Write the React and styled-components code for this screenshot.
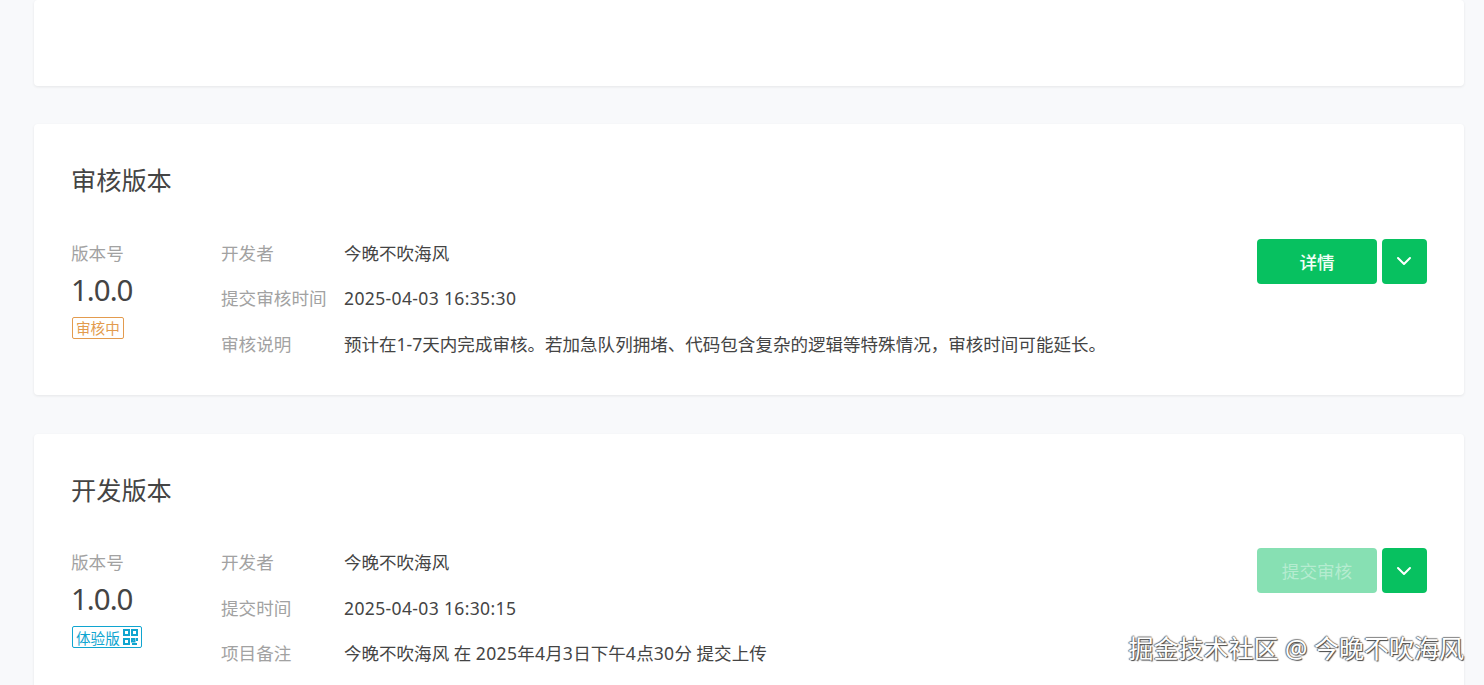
import React from "react"
import styled, { createGlobalStyle } from "styled-components"

const GlobalStyle = createGlobalStyle`
    html, body {
        margin: 0;
        padding: 0;
        height: 100%;
        overflow: hidden;
        background: #f8f9fb;
        font-family: "Noto Sans", "Noto Sans CJK SC", "Liberation Sans", sans-serif;
    }
`

const Page = styled.div`
    position: relative;
    width: 1484px;
    height: 685px;
    overflow: hidden;
    box-sizing: border-box;
    padding: 0 20px 0 34px;
    display: flex;
    flex-direction: column;
    gap: 38.5px;
`

const Card = styled.section`
    flex: none;
    background: #fff;
    border-radius: 4px;
    box-shadow: 0 1px 3px rgba(0, 0, 0, 0.08);
    box-sizing: border-box;
    height: ${(p) => p.$height}px;
    padding: 0 37px 0 37px;
`

const Title = styled.h2`
    margin: 0;
    padding-top: 40px;
    height: 114px;
    box-sizing: border-box;
    font-size: 25.2px;
    line-height: 32px;
    font-weight: 400;
    color: #444;
`

const Body = styled.div`
    display: flex;
    align-items: flex-start;
`

const VersionCol = styled.div`
    width: 150px;
    flex: none;
`

const Label = styled.div`
    font-size: 17.6px;
    line-height: 30px;
    margin-top: -0.5px;
    color: #a2a2a2;
    white-space: nowrap;
`

const VersionNum = styled.div`
    font-size: 29.5px;
    line-height: 40px;
    letter-spacing: -1px;
    margin-top: 2px;
    color: #444;
`

const Tag = styled.span`
    display: inline-flex;
    align-items: center;
    gap: 3px;
    box-sizing: border-box;
    height: 22px;
    margin: 7px 0 0 1px;
    padding: 0 3px;
    font-size: 14.6px;
    border: 1px solid ${(p) => p.$color};
    border-radius: 2px;
    color: ${(p) => p.$color};
`

const Rows = styled.div`
    flex: 1;
    display: grid;
    grid-template-columns: 123px 1fr;
    grid-auto-rows: 45.6px;
`

const Value = styled.div`
    font-size: 17.55px;
    line-height: 30px;
    margin-top: -0.5px;
    color: #444;
    white-space: nowrap;
`

const Num = styled.span`
    letter-spacing: 0.35px;
`

const Actions = styled.div`
    flex: none;
    display: flex;
    gap: 5px;
    margin-top: 0.5px;
`

const MainButton = styled.button`
    width: 120px;
    height: 45px;
    border: 0;
    border-radius: 4px;
    padding: 0;
    font-family: inherit;
    font-size: 17.6px;
    font-weight: ${(p) => (p.disabled ? 400 : 500)};
    color: ${(p) => (p.disabled ? "#b5ecd0" : "#f4fff9")};
    background: ${(p) => (p.disabled ? "#87e0b3" : "#07c160")};
`

const ArrowButton = styled.button`
    width: 45px;
    height: 45px;
    border: 0;
    border-radius: 4px;
    padding: 0 2px 0 0;
    display: flex;
    align-items: center;
    justify-content: center;
    background: #07c160;
`

const Watermark = styled.div`
    position: absolute;
    right: 20px;
    top: 631px;
    font-size: 25px;
    line-height: 34px;
    white-space: nowrap;
    color: #fff;
    text-shadow: 1px 1px 1px #444, -1px 0 1px #666, 0 -1px 1px #888;
`

const Chevron = () => (
    <svg width="16" height="10" viewBox="0 0 16 10" fill="none">
        <path d="M2 2l6 6 6-6" stroke="#fff" strokeWidth="2" strokeLinecap="round" strokeLinejoin="round" />
    </svg>
)

const QrIcon = () => (
    <svg width="15" height="16" viewBox="0 0 15 16" fill="none" stroke="currentColor" strokeWidth="2">
        <rect x="1" y="1" width="5" height="5" />
        <rect x="9" y="1" width="5" height="5" />
        <rect x="1" y="10" width="5" height="5" />
        <path d="M9 10h2.5v2.5H9zM14 9v3M9 15h5" />
    </svg>
)

const versions = [
    {
        title: "审核版本",
        tag: "审核中",
        tagColor: "#e39b4e",
        button: "详情",
        rows: [
            ["开发者", "今晚不吹海风"],
            ["提交审核时间", <Num>2025-04-03 16:35:30</Num>],
            ["审核说明", "预计在1-7天内完成审核。若加急队列拥堵、代码包含复杂的逻辑等特殊情况，审核时间可能延长。"],
        ],
    },
    {
        title: "开发版本",
        tag: "体验版",
        tagColor: "#10a5d0",
        qr: true,
        button: "提交审核",
        disabled: true,
        rows: [
            ["开发者", "今晚不吹海风"],
            ["提交时间", <Num>2025-04-03 16:30:15</Num>],
            ["项目备注", <>今晚不吹海风 在 <Num>2025</Num>年<Num>4</Num>月<Num>3</Num>日下午<Num>4</Num>点<Num>30</Num>分 提交上传</>],
        ],
    },
]

export default function App() {
    return (
        <Page>
            <GlobalStyle />
            <Card $height={85.5} />
            {versions.map((v) => (
                <Card key={v.title} $height={271}>
                    <Title>{v.title}</Title>
                    <Body>
                        <VersionCol>
                            <Label>版本号</Label>
                            <VersionNum>1.0.0</VersionNum>
                            <Tag $color={v.tagColor}>
                                {v.tag}
                                {v.qr && <QrIcon />}
                            </Tag>
                        </VersionCol>
                        <Rows>
                            {v.rows.map(([label, value]) => (
                                <React.Fragment key={label}>
                                    <Label>{label}</Label>
                                    <Value>{value}</Value>
                                </React.Fragment>
                            ))}
                        </Rows>
                        <Actions>
                            <MainButton disabled={v.disabled}>{v.button}</MainButton>
                            <ArrowButton aria-label="更多">
                                <Chevron />
                            </ArrowButton>
                        </Actions>
                    </Body>
                </Card>
            ))}
            <Watermark>掘金技术社区 @ 今晚不吹海风</Watermark>
        </Page>
    )
}
